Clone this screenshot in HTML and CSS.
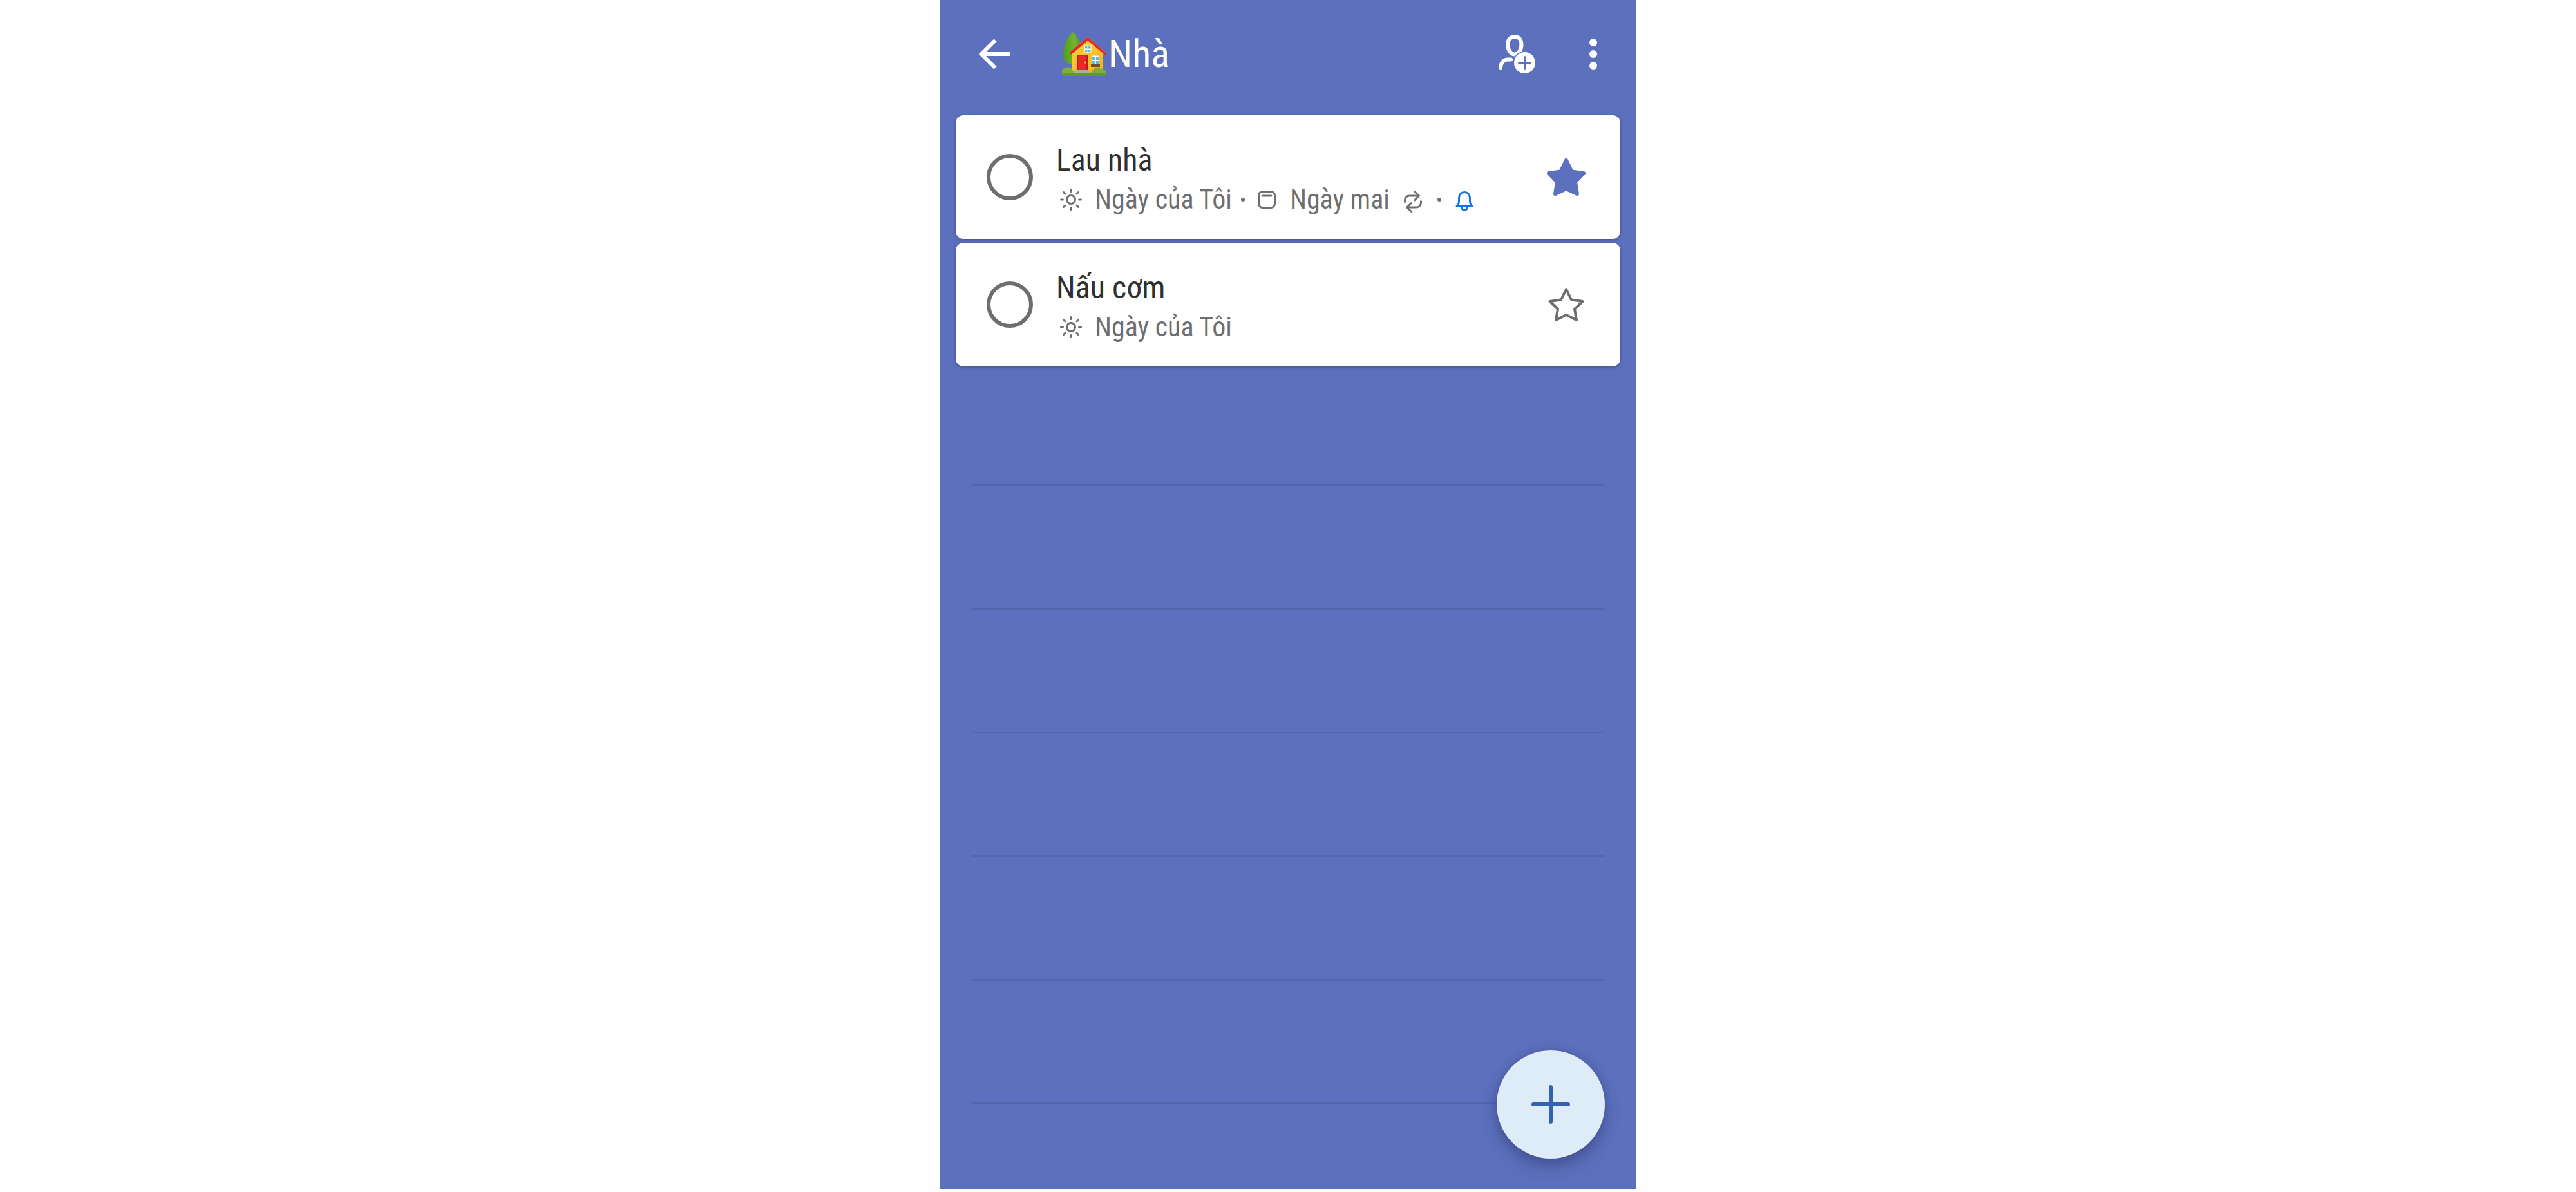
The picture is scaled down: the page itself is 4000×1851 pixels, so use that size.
FILE: index.html
```html
<!DOCTYPE html>
<html lang="vi">
<head>
<meta charset="utf-8">
<meta name="viewport" content="width=device-width, initial-scale=1">
<title>Nhà</title>
<link rel="stylesheet" href="styles.css">
</head>
<body>
<div class="app">
  <header class="bar">
    <button class="icon-button" type="button" aria-label="Quay lại">
      <svg width="48" height="48" viewBox="0 0 48 48" fill="none" stroke="currentColor" stroke-width="6"><path d="M48 24H4M25.500 2.500 4 24l21.500 21.500"/></svg>
    </button>
    <h1 class="title">
      <svg class="house" width="68" height="68" viewBox="0 0 68 68" aria-hidden="true">
        <defs>
          <linearGradient id="leaf" x1="0" x2="1"><stop offset="0" stop-color="#4d9d1c"/><stop offset=".6" stop-color="#74b42b"/><stop offset="1" stop-color="#4b901e"/></linearGradient>
          <linearGradient id="wall" x1="0" x2="1" y1="0" y2="1"><stop offset="0" stop-color="#ffd13d"/><stop offset="1" stop-color="#f8b117"/></linearGradient>
        </defs>
        <path d="M17 0C9 6 2 21 2 34c0 10 6 16 15 16s15-6 15-16C32 21 24 6 17 0z" fill="url(#leaf)"/>
        <path d="M16 32 40 11l24 21v31H16z" fill="url(#wall)"/>
        <path d="M12 31 40 8l28 24v4L40 13 14 35z" fill="#df2721"/>
        <path d="M12 31 40 8l28 24" fill="none" stroke="#ef5340" stroke-width="1"/>
        <path d="M34.500 20.500h11v11h-11z" fill="#fff"/>
        <path d="M36 22h3.500v3.500H36zM41 22h3.500v3.500H41zM36 27h3.500v3.500H36zM41 27h3.500v3.500H41z" fill="#54bdf0"/>
        <path d="M23 35h17v25H23z" fill="#b5201c"/>
        <path d="M25 36.500h13V59H25z" fill="#e52a2a"/>
        <circle cx="36.500" cy="47" r="1.500" fill="#ffca28"/>
        <path d="M46 36.500h12V51H46z" fill="#fff"/>
        <path d="M47 38h4.500v5H47zM53 38h4v5h-4zM47 44.500h4.500V50H47zM53 44.500h4V50h-4z" fill="#54bdf0"/>
        <path d="M45 50h14v4H45z" fill="#774f2c"/>
        <path d="M0 68v-6c0-5 4-8 8-7 3-2 8 0 9 5h2v4h25l4-5c2-5 9-6 12-2 4-1 8 2 8 5v6z" fill="#82ad3c"/>
        <path d="M21 58h20v3H21zM19 61h25v3H19z" fill="#b2aaa6"/>
        <path d="M0 63h68v5H0z" fill="#609c22"/>
      </svg><span>Nhà</span>
    </h1>
    <button class="icon-button" type="button" aria-label="Thêm người">
      <svg width="57" height="60" viewBox="0 0 57 60" fill="none" stroke="#fff" stroke-width="6" stroke-linecap="round">
        <path d="M25 3c6 0 10.500 4.500 10.500 12 0 8-4.500 15.500-10.500 15.500S14 23 14 15C14 7.500 19 3 25 3z"/>
        <path d="M3 51c.5-8 5.500-12.500 11-12.500h5"/>
        <circle cx="40.500" cy="43.500" r="18" fill="#5c70be" stroke="none"/>
        <circle cx="40.500" cy="43.500" r="16.500" fill="#fff" stroke="none"/>
        <path d="M40.500 34.500v18M31.500 43.500h18" stroke="#5c70be" stroke-width="3"/>
      </svg>
    </button>
    <button class="icon-button more" type="button" aria-label="Tùy chọn khác">
      <svg width="12" height="48" viewBox="0 0 12 48" fill="currentColor"><circle cx="6" cy="6" r="6"/><circle cx="6" cy="24" r="6"/><circle cx="6" cy="42" r="6"/></svg>
    </button>
  </header>

  <main class="content">
    <ul class="tasks">
      <li class="task">
        <input class="check" type="checkbox" id="task-1">
        <div class="body">
          <label class="name" for="task-1">Lau nhà</label>
          <div class="meta">
            <svg class="sun" width="34" height="34" viewBox="0 0 34 34"><use href="#sun"/></svg>
            <span>Ngày của Tôi</span>
            <i class="dot"></i>
            <svg class="calendar" width="28" height="28" viewBox="0 0 28 28"><rect x="1.500" y="1.500" width="25" height="25" rx="6"/><path d="M7 8h14"/></svg>
            <span>Ngày mai</span>
            <svg class="repeat" width="28" height="34" viewBox="0 0 28 34"><path d="M1.500 17.500V15a7 7 0 0 1 7-7H23M16.500 1.500 23.500 8l-7 7M26.500 16.500V19a7 7 0 0 1-7 7H5M11.500 19.500 4.500 26l7 6.500"/></svg>
            <i class="dot"></i>
            <svg class="bell" width="28" height="32" viewBox="0 0 28 32"><path d="M2 23.500c2.500-2 3.500-5 3.500-8.500v-4.500C5.500 5 9 1.500 14 1.500s8.500 3.500 8.500 9V15c0 3.500 1 6.500 3.500 8.500zM9.500 24c0 3.500 2 5.500 4.500 5.500s4.500-2 4.500-5.500"/></svg>
          </div>
        </div>
        <button class="star starred" type="button" aria-label="Bỏ đánh dấu quan trọng">
          <svg width="60" height="60" viewBox="0 0 60 60"><path d="m30 4 8.500 17.500L57 24 44 37.500 47 56l-17-8-17 8 3-18.500L3 24l18.500-2.500z"/></svg>
        </button>
      </li>
      <li class="task">
        <input class="check" type="checkbox" id="task-2">
        <div class="body">
          <label class="name" for="task-2">Nấu cơm</label>
          <div class="meta">
            <svg class="sun" width="34" height="34" viewBox="0 0 34 34"><g id="sun"><circle cx="17" cy="17" r="6.500"/><path d="M17 1.500v3M17 29.500v3M1.500 17h3M29.500 17h3M5.500 5.500l2.500 2.500M26 26l2.500 2.500M28.500 5.500 26 8M8 26l-2.500 2.500"/></g></svg>
            <span>Ngày của Tôi</span>
          </div>
        </div>
        <button class="star" type="button" aria-label="Đánh dấu quan trọng">
          <svg width="60" height="60" viewBox="0 0 60 60"><path d="m30 6 8 16.500 17.500 2.500L43 37l3 17-16-8-16 8 3-17L4.500 25 22 22.500z"/></svg>
        </button>
      </li>
    </ul>
    <div class="rules"></div>
  </main>

  <button class="add" type="button" aria-label="Thêm tác vụ">
    <svg width="60" height="60" viewBox="0 0 60 60" fill="none" stroke="currentColor" stroke-width="6" stroke-linecap="round"><path d="M30 3v54M3 30h54"/></svg>
  </button>
</div>
</body>
</html>
```
FILE: styles.css
```css
* { box-sizing: border-box; }

body {
  margin: 0;
  background: #fff;
  font-family: "Roboto Condensed", Roboto, "Noto Sans", sans-serif;
}

button {
  margin: 0;
  padding: 0;
  border: 0;
  background: none;
  color: inherit;
  font: inherit;
}

svg { display: block; flex: none; }

.app {
  position: relative;
  display: flex;
  flex-direction: column;
  max-width: 1080px;
  min-height: calc(100vh - 4px);
  margin: 0 auto;
  background: #5c70be;
}

.bar {
  display: flex;
  align-items: center;
  height: 167px;
  padding: 0 60px;
  color: #fff;
}

.title {
  display: flex;
  flex: 1;
  align-items: center;
  gap: 4px;
  margin: 0 0 0 81px;
  font-size: 60px;
  font-weight: 400;
  line-height: 72px;
}

.more { margin-left: 84px; }

.content {
  display: flex;
  flex: 1;
  flex-direction: column;
  padding: 12px 24px 0;
}

.tasks {
  display: flex;
  flex-direction: column;
  gap: 6px;
  margin: 0;
  padding: 0;
  list-style: none;
}

.task {
  display: flex;
  align-items: center;
  height: 192px;
  padding: 0 54px 0 48px;
  border-radius: 12px;
  background: #fff;
  box-shadow: 0 1px 4px rgba(40, 40, 80, .5);
}

.check {
  flex: none;
  width: 72px;
  height: 72px;
  margin: 0;
  border: 6px solid #6e6e6e;
  border-radius: 50%;
  appearance: none;
}

.body {
  flex: 1;
  margin-left: 36px;
  padding-top: 8px;
}

.name {
  display: block;
  color: #303030;
  font-size: 48px;
  line-height: 62px;
}

.meta {
  display: flex;
  align-items: center;
  color: #6e6e6e;
  font-size: 42px;
  line-height: 60px;
}

.meta svg {
  fill: none;
  stroke: currentColor;
  stroke-width: 3;
  stroke-linecap: round;
  stroke-linejoin: round;
}

.sun { margin: 0 20px 0 6px; }
.calendar { margin: 0 22px 0 20px; }
.repeat { margin: 6px 24px 0 22px; }
.bell { margin: 6px 0 0 22px; color: #1572e8; }

.dot {
  width: 6px;
  height: 6px;
  margin-left: 14px;
  border-radius: 50%;
  background: currentColor;
}

.repeat + .dot { margin-left: 0; }

.star svg {
  fill: none;
  stroke: #6e6e6e;
  stroke-width: 4;
  stroke-linejoin: round;
}

.starred svg {
  fill: #5c70be;
  stroke: #5c70be;
  stroke-width: 6;
}

.rules {
  flex: 1;
  margin: 0 24px;
  background: repeating-linear-gradient(transparent 0 183px, #5366ae 183px 186px, transparent 186px 192px);
}

.add {
  position: absolute;
  right: 48px;
  bottom: 48px;
  display: grid;
  place-items: center;
  width: 168px;
  height: 168px;
  border-radius: 50%;
  background: #deecf7;
  color: #3462ad;
  box-shadow: 0 12px 24px rgba(40, 45, 90, .4), 0 0 12px rgba(40, 45, 90, .2);
}
```
